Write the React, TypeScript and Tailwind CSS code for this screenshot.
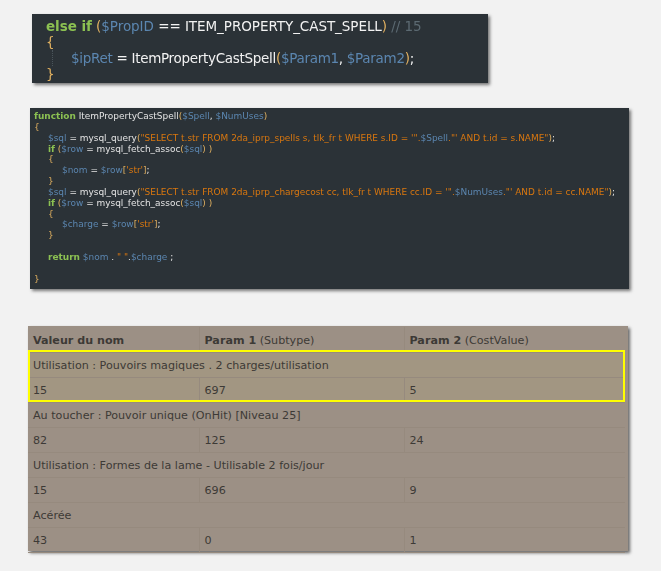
const font = { fontFamily: '"DejaVu Sans", Verdana, sans-serif' };

const K = ({ children }: { children: React.ReactNode }) => <span className="font-bold text-[#8cc152]">{children}</span>;
const V = ({ children }: { children: React.ReactNode }) => <span className="text-[#5b86b0]">{children}</span>;
const P = ({ children }: { children: React.ReactNode }) => <span className="text-[#e0b060]">{children}</span>;
const S = ({ children }: { children: React.ReactNode }) => <span className="text-[#d9770f]">{children}</span>;

function Cell({ children, span }: { children: React.ReactNode; span?: boolean }) {
  return (
    <td colSpan={span ? 3 : 1} className="h-[25px] border-r border-b border-[#968a7e] pl-[5px] pt-[4px] align-middle text-[11.15px] text-[#3d3a36] whitespace-nowrap last:border-r-0">
      {children}
    </td>
  );
}

function Rows({ name, a, b, c, hi }: { name: string; a: string; b: string; c: string; hi?: boolean }) {
  const bg = hi ? "bg-[#a29682]" : "";
  return (
    <>
      <tr className={bg}><Cell span>{name}</Cell></tr>
      <tr className={bg}><Cell>{a}</Cell><Cell>{b}</Cell><Cell>{c}</Cell></tr>
    </>
  );
}

export default function App() {
  return (
    <div className="w-[661px] h-[571px] overflow-hidden bg-[#f2f2f2] pt-[14px]" style={font}>
      <div className="ml-[32px] w-[456px] h-[69px] bg-[#2b3237] pl-[14px] pt-[4px] text-[13.5px] leading-[16px] text-[#f2f2f2] shadow-[2px_2px_3px_#777] whitespace-pre blur-[0.25px]">
        <div className="tracking-[-0.05px]"><K>else if</K> <P>(</P><V>$PropID</V> == ITEM_PROPERTY_CAST_SPELL<P>)</P> <span className="text-[#5c6a72]">// 15</span></div>
        <div><P>{"{"}</P></div>
        <div className="ml-[6px] pl-[18px] border-l border-dotted border-[#4a545a] tracking-[-0.3px]"><V>$ipRet</V> = ItemPropertyCastSpell<P>(</P><V>$Param1</V>, <V>$Param2</V><P>)</P>;</div>
        <div><P>{"}"}</P></div>
      </div>

      <div className="ml-[30px] mt-[25px] w-[599px] h-[181px] bg-[#2b3237] pl-[4px] pt-[3px] text-[8.96px] leading-[10.85px] text-[#e4e4e4] shadow-[2px_2px_3px_#777] whitespace-pre blur-[0.3px]">
        <div><K>function</K> ItemPropertyCastSpell<P>(</P><V>$Spell</V>, <V>$NumUses</V><P>)</P></div>
        <div><P>{"{"}</P></div>
        <div className="pl-[14px]"><V>$sql</V> = mysql_query<P>(</P><S>"SELECT t.str FROM 2da_iprp_spells s, tlk_fr t WHERE s.ID = '".</S><V>$Spell</V><S>."' AND t.id = s.NAME"</S><P>)</P>;</div>
        <div className="pl-[14px]"><K>if</K> <P>(</P><V>$row</V> = mysql_fetch_assoc<P>(</P><V>$sql</V><P>)</P> <P>)</P></div>
        <div className="pl-[14px]"><P>{"{"}</P></div>
        <div className="pl-[28px]"><V>$nom</V> = <V>$row</V><P>[</P><S>'str'</S><P>]</P>;</div>
        <div className="pl-[14px]"><P>{"}"}</P></div>
        <div className="pl-[14px]"><V>$sql</V> = mysql_query<P>(</P><S>"SELECT t.str FROM 2da_iprp_chargecost cc, tlk_fr t WHERE cc.ID = '".</S><V>$NumUses</V><S>."' AND t.id = cc.NAME"</S><P>)</P>;</div>
        <div className="pl-[14px]"><K>if</K> <P>(</P><V>$row</V> = mysql_fetch_assoc<P>(</P><V>$sql</V><P>)</P> <P>)</P></div>
        <div className="pl-[14px]"><P>{"{"}</P></div>
        <div className="pl-[28px]"><V>$charge</V> = <V>$row</V><P>[</P><S>'str'</S><P>]</P>;</div>
        <div className="pl-[14px]"><P>{"}"}</P></div>
        <div className="h-[10.85px]" />
        <div className="pl-[14px]"><K>return</K> <V>$nom</V> . <S>" "</S>.<V>$charge</V> ;</div>
        <div className="h-[10.85px]" />
        <div><P>{"}"}</P></div>
      </div>

      <div className="relative ml-[28px] mt-[37px] w-[600px] h-[225px] bg-[#9c9085] pt-[1px] shadow-[2px_2px_3px_#666]">
        <table className="w-[597px] table-fixed border-collapse">
          <colgroup>
            <col className="w-[171px]" />
            <col className="w-[205px]" />
            <col className="w-[221px]" />
          </colgroup>
          <tbody>
            <tr>
              <Cell><b>Valeur du nom</b></Cell>
              <Cell><b>Param 1</b> (Subtype)</Cell>
              <Cell><b>Param 2</b> (CostValue)</Cell>
            </tr>
            <Rows hi name="Utilisation : Pouvoirs magiques . 2 charges/utilisation" a="15" b="697" c="5" />
            <Rows name="Au toucher : Pouvoir unique (OnHit) [Niveau 25]" a="82" b="125" c="24" />
            <Rows name="Utilisation : Formes de la lame - Utilisable 2 fois/jour" a="15" b="696" c="9" />
            <Rows name="Acérée" a="43" b="0" c="1" />
          </tbody>
        </table>
        <div className="absolute left-0 top-[24px] w-[597px] h-[52px] border-2 border-[#ffff00]" />
      </div>
    </div>
  );
}
